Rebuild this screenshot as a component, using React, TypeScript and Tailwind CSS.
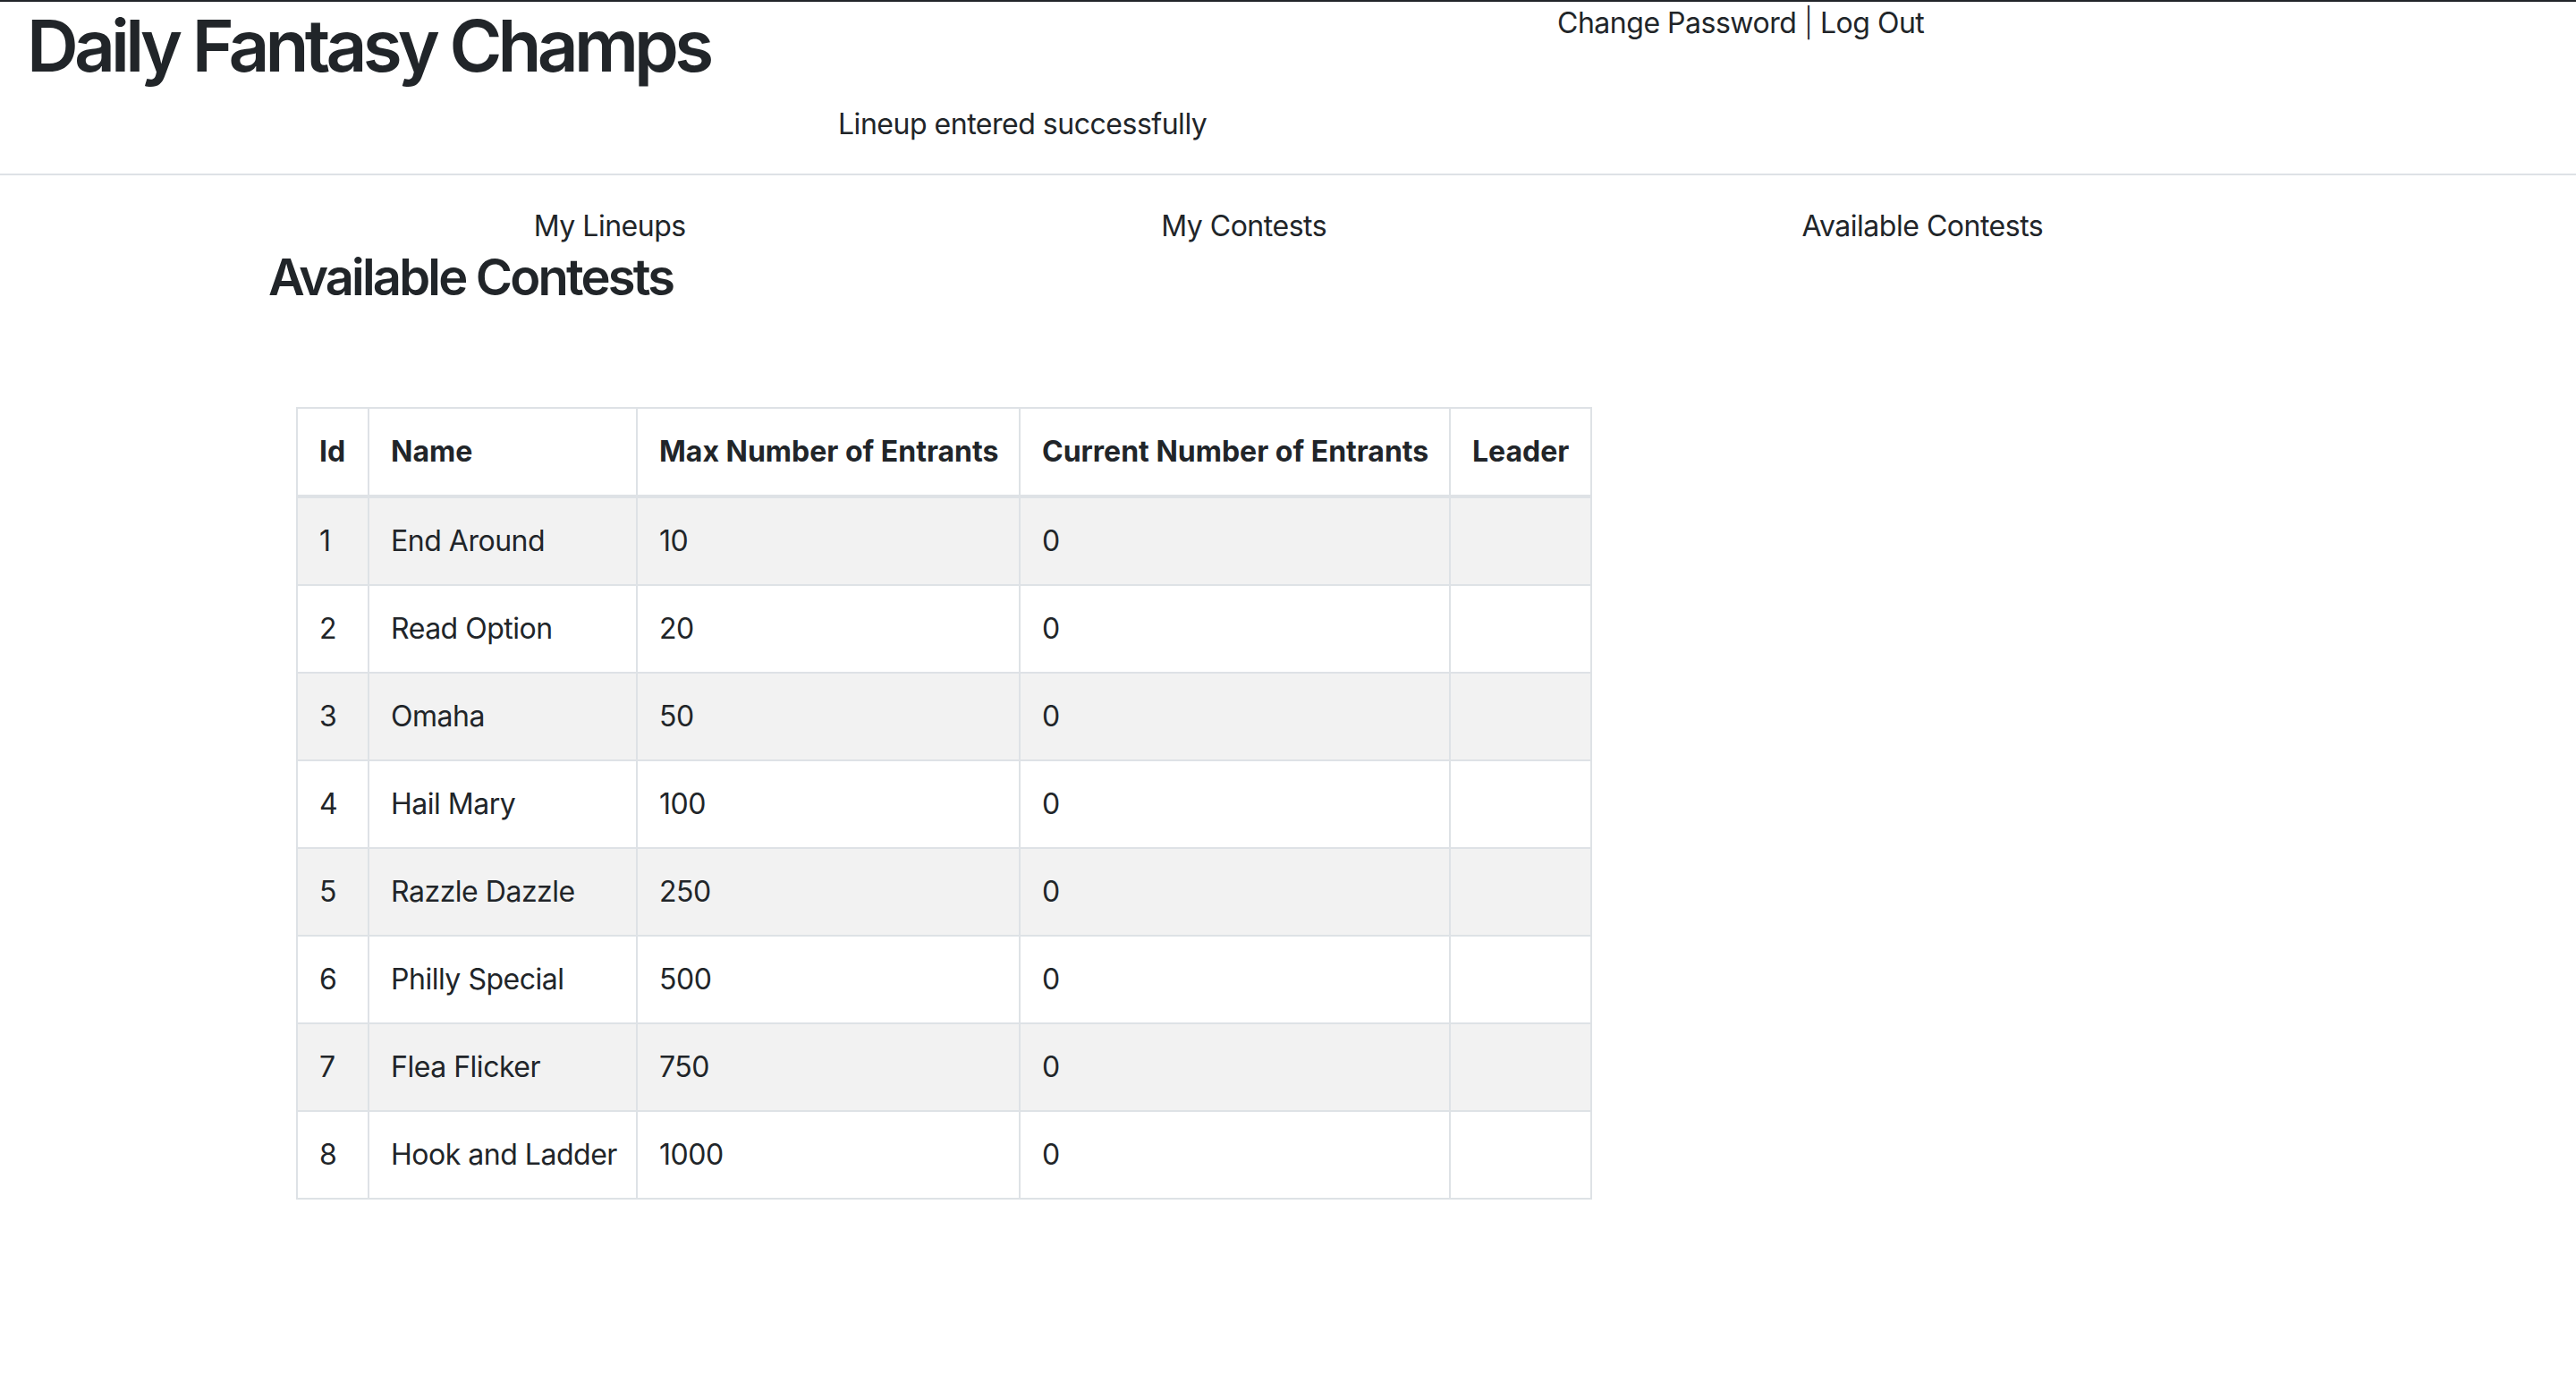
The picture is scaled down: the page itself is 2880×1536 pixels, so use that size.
import React from "react";

const contests = [
  { id: 1, name: "End Around", max: 10, current: 0 },
  { id: 2, name: "Read Option", max: 20, current: 0 },
  { id: 3, name: "Omaha", max: 50, current: 0 },
  { id: 4, name: "Hail Mary", max: 100, current: 0 },
  { id: 5, name: "Razzle Dazzle", max: 250, current: 0 },
  { id: 6, name: "Philly Special", max: 500, current: 0 },
  { id: 7, name: "Flea Flicker", max: 750, current: 0 },
  { id: 8, name: "Hook and Ladder", max: 1000, current: 0 },
];

export default function App() {
  return (
    <div className="min-h-[1536px] bg-white border-t-2 border-[#212529] text-[#212529] tracking-[-0.03em] font-['Inter','Liberation_Sans',sans-serif]">
      {/* header */}
      <header className="flex border-b-2 border-[#dee2e6] pb-[31px]">
        <div className="w-[1739px] shrink-0 pl-[30px]">
          <h1 className="pt-px mb-4 text-[80px] leading-[96px] font-semibold tracking-[-0.06em]">
            Daily Fantasy Champs
          </h1>
          <p className="pl-[907px] text-[32px] leading-[48px]">
            Lineup entered successfully
          </p>
        </div>
        <div className="pl-[2px] text-[32px] leading-[48px]">
          <a href="#">Change Password</a> <span className="font-light">|</span> <a href="#">Log Out</a>
        </div>
      </header>

      <main className="pl-[300px]">
        <nav className="ml-[31px] mr-[330px] mt-[33px] flex justify-around text-[32px] leading-[48px]">
          <a href="#">My Lineups</a>
          <a href="#">My Contests</a>
          <a href="#">Available Contests</a>
        </nav>
        <h3 className="text-[56px] leading-[67px] font-semibold tracking-[-0.05em]">Available Contests</h3>

        <table className="ml-[31px] mt-[111px] w-[1447px] table-fixed border-collapse border-2 border-[#dee2e6] text-[32px] leading-[48px]">
          <colgroup>
            <col className="w-[80px]" />
            <col className="w-[300px]" />
            <col className="w-[428px]" />
            <col className="w-[481px]" />
            <col className="w-[158px]" />
          </colgroup>
          <thead>
            <tr className="text-left tracking-normal">
              <th className="border-2 border-b-4 border-[#dee2e6] p-6 font-bold">Id</th>
              <th className="border-2 border-b-4 border-[#dee2e6] p-6 font-bold">Name</th>
              <th className="border-2 border-b-4 border-[#dee2e6] p-6 font-bold whitespace-nowrap">Max Number of Entrants</th>
              <th className="border-2 border-b-4 border-[#dee2e6] p-6 font-bold whitespace-nowrap">Current Number of Entrants</th>
              <th className="border-2 border-b-4 border-[#dee2e6] p-6 font-bold">Leader</th>
            </tr>
          </thead>
          <tbody>
            {contests.map((c) => (
              <tr key={c.id} className="odd:bg-[#f2f2f2]">
                <td className="border-2 border-[#dee2e6] p-6">{c.id}</td>
                <td className="border-2 border-[#dee2e6] p-6 whitespace-nowrap">{c.name}</td>
                <td className="border-2 border-[#dee2e6] p-6">{c.max}</td>
                <td className="border-2 border-[#dee2e6] p-6">{c.current}</td>
                <td className="border-2 border-[#dee2e6] p-6"></td>
              </tr>
            ))}
          </tbody>
        </table>
      </main>
    </div>
  );
}
